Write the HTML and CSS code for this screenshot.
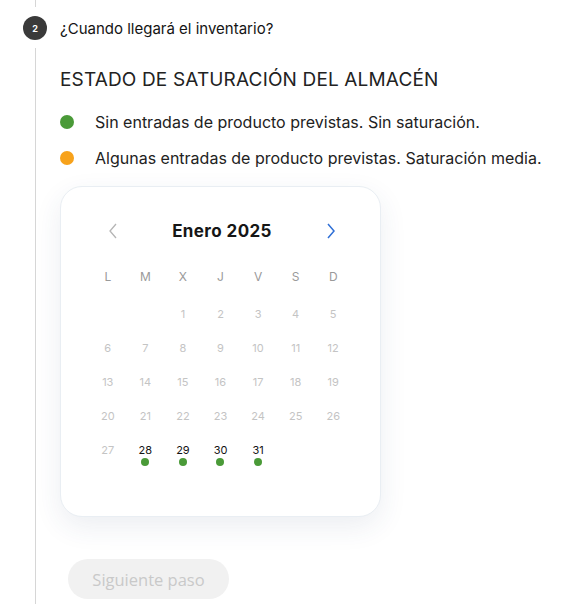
FILE: index.html
```html
<!DOCTYPE html>
<html lang="es">
<head>
<meta charset="utf-8">
<link rel="stylesheet" href="styles.css">
</head>
<body>
<div class="step">
  <div class="line-top"></div>
  <div class="step-head">
    <span class="badge">2</span>
    <span class="question">¿Cuando llegará el inventario?</span>
  </div>
  <div class="step-body">
    <h2 class="title">ESTADO DE SATURACIÓN DEL ALMACÉN</h2>
    <ul class="legend">
      <li><span class="dot green"></span>Sin entradas de producto previstas. Sin saturación.</li>
      <li><span class="dot orange"></span>Algunas entradas de producto previstas. Saturación media.</li>
    </ul>
    <div class="card">
      <div class="cal-head">
        <svg class="chev" width="10" height="16" viewBox="0 0 10 16"><path d="M8 1 L2 8 L8 15" fill="none" stroke="#b5b5b5" stroke-width="1.3"/></svg>
        <span class="month">Enero 2025</span>
        <svg class="chev" width="10" height="16" viewBox="0 0 10 16"><path d="M2 1 L8 8 L2 15" fill="none" stroke="#2f6fd6" stroke-width="1.5"/></svg>
      </div>
      <div class="grid week">
        <span>L</span><span>M</span><span>X</span><span>J</span><span>V</span><span>S</span><span>D</span>
      </div>
      <div class="grid days">
        <span></span><span></span><span>1</span><span>2</span><span>3</span><span>4</span><span>5</span>
        <span>6</span><span>7</span><span>8</span><span>9</span><span>10</span><span>11</span><span>12</span>
        <span>13</span><span>14</span><span>15</span><span>16</span><span>17</span><span>18</span><span>19</span>
        <span>20</span><span>21</span><span>22</span><span>23</span><span>24</span><span>25</span><span>26</span>
        <span>27</span><span class="on">28<i></i></span><span class="on">29<i></i></span><span class="on">30<i></i></span><span class="on">31<i></i></span><span></span><span></span>
      </div>
    </div>
    <button class="next" type="button">Siguiente paso</button>
  </div>
</div>
</body>
</html>
```
FILE: styles.css
```css
html, body {
  margin: 0;
  padding: 0;
  background: #ffffff;
}
body {
  font-family: Inter, "Noto Sans", sans-serif;
  color: #1a1a1a;
  width: 586px;
  height: 604px;
  overflow: hidden;
}
.step {
  display: flex;
  flex-direction: column;
}
.line-top {
  height: 7px;
  margin-left: 35px;
  border-left: 1px solid #d6d6d6;
}
.step-head {
  display: flex;
  align-items: center;
  gap: 13px;
  padding: 9px 0 0 23px;
  height: 24px;
}
.badge {
  width: 24px;
  height: 24px;
  border-radius: 50%;
  background: #3a3a3a;
  color: #fff;
  font-size: 9px;
  font-weight: 700;
  display: flex;
  align-items: center;
  justify-content: center;
}
.question {
  font-size: 15px;
  color: #141414;
}
.step-body {
  margin: 8px 0 0 35px;
  border-left: 1px solid #d6d6d6;
  padding: 20px 0 6px 24px;
  display: flex;
  flex-direction: column;
  align-items: flex-start;
}
.title {
  margin: 0;
  font-size: 19px;
  font-weight: 400;
  line-height: 24px;
  color: #222;
  letter-spacing: 0.15px;
}
.legend {
  list-style: none;
  margin: 19px 0 0;
  padding: 0;
  display: flex;
  flex-direction: column;
  gap: 14px;
}
.legend li {
  display: flex;
  align-items: center;
  gap: 21px;
  font-size: 16px;
  line-height: 22px;
  color: #222;
}
.dot {
  width: 14px;
  height: 14px;
  border-radius: 50%;
  flex: none;
}
.green { background: #4a9a38; }
.orange { background: #f7a21b; }
.card {
  margin-top: 17px;
  width: 321px;
  height: 331px;
  box-sizing: border-box;
  padding: 0 28px;
  border: 1px solid #e9eef3;
  border-radius: 22px;
  background: #fff;
  box-shadow: 0 10px 28px rgba(40, 70, 110, 0.09);
}
.cal-head {
  display: flex;
  align-items: center;
  justify-content: space-between;
  height: 30px;
  margin-top: 29px;
  padding: 0 16px 0 19px;
}
.month {
  font-size: 17px;
  font-weight: 700;
  color: #161616;
  letter-spacing: 0.4px;
}
.grid {
  display: grid;
  grid-template-columns: repeat(7, 1fr);
  text-align: center;
}
.week {
  margin-top: 23px;
  font-size: 12px;
  line-height: 16px;
  color: #9a9a9a;
}
.days {
  margin-top: 21px;
  grid-auto-rows: 34px;
  font-size: 11px;
  line-height: 16px;
  color: #c4c4c4;
}
.days span {
  display: flex;
  flex-direction: column;
  align-items: center;
}
.days .on {
  color: #141414;
}
.days .on i {
  display: block;
  width: 8px;
  height: 8px;
  border-radius: 50%;
  background: #4a9a38;
}
.next {
  margin: 42px 0 0 8px;
  width: 161px;
  height: 40px;
  border: none;
  border-radius: 20px;
  background: #f1f1f1;
  color: #c9c9c9;
  font-family: "Open Sans", sans-serif;
  font-size: 16.5px;
  padding: 0;
}
```
